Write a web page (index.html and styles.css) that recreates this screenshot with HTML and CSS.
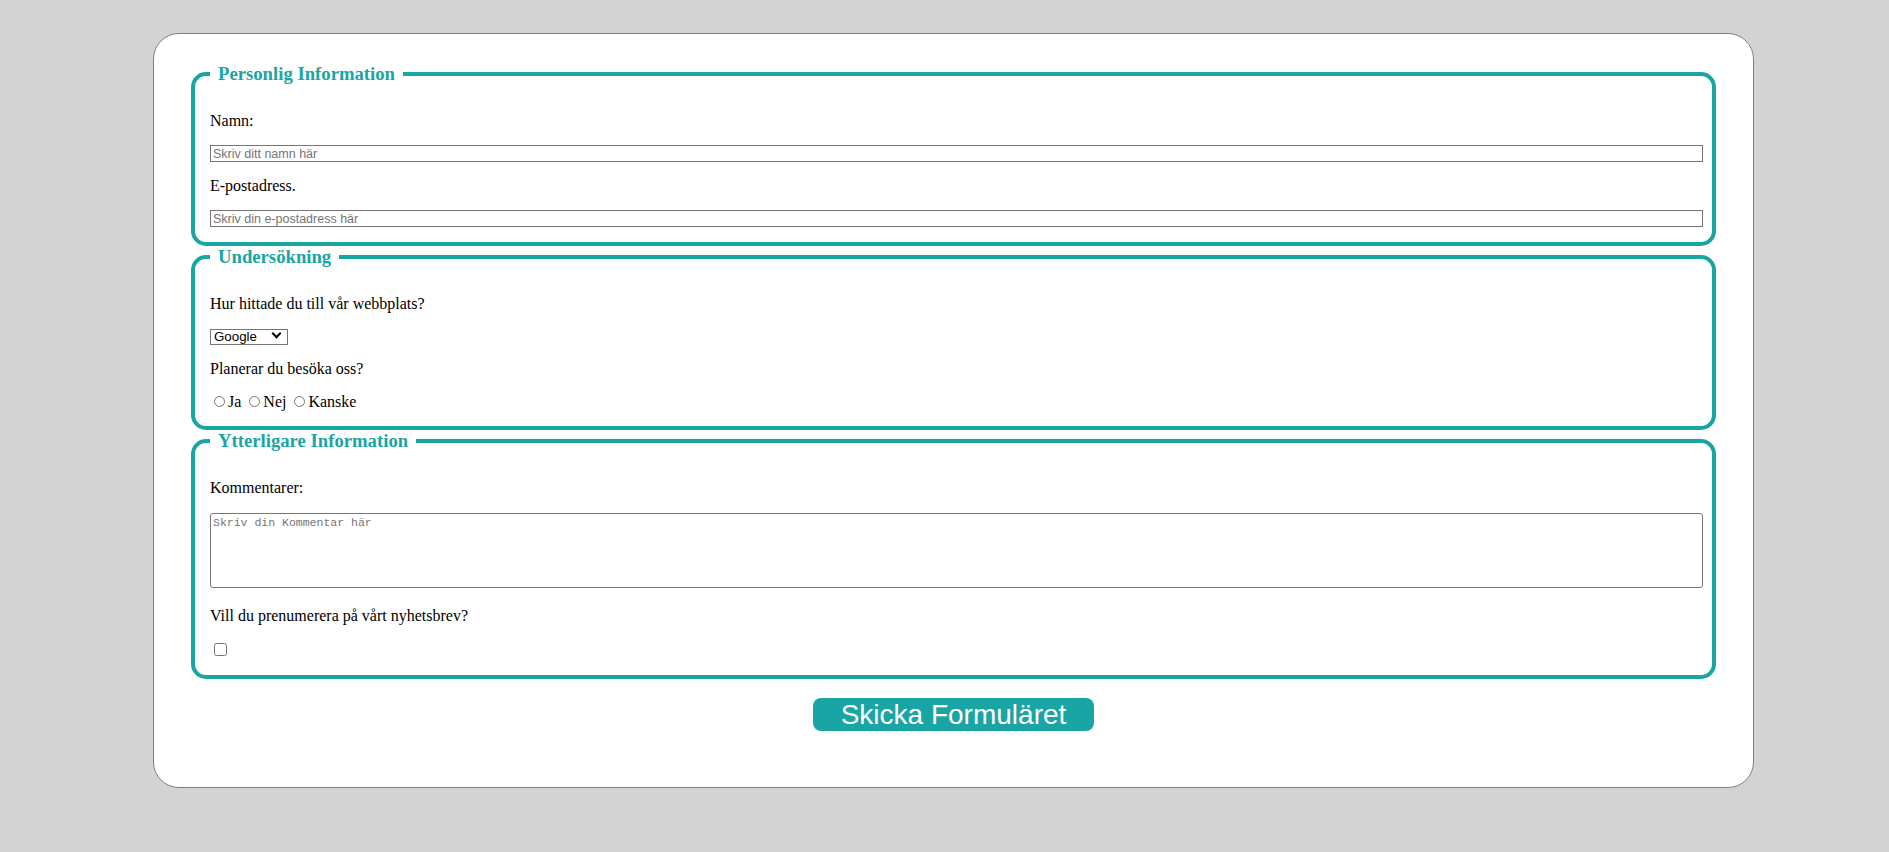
FILE: index.html
```html
<!DOCTYPE html>
<html lang="sv">
<head>
  <meta charset="UTF-8">
  <meta name="viewport" content="width=device-width, initial-scale=1.0">
  <title>Formulär</title>
  <link rel="stylesheet" href="styles.css">
</head>
<body>
  <div class="container">
    <form>
      <fieldset>
        <legend>Personlig Information</legend>
        <div class="fields">
          <label for="namn">Namn:</label>
          <input type="text" id="namn" name="namn" placeholder="Skriv ditt namn här">
          <label for="epost">E-postadress.</label>
          <input type="email" id="epost" name="epost" placeholder="Skriv din e-postadress här">
        </div>
      </fieldset>

      <fieldset>
        <legend>Undersökning</legend>
        <div class="fields">
          <label for="kalla">Hur hittade du till vår webbplats?</label>
          <span class="select-wrap">
            <select id="kalla" name="kalla">
              <option>Google</option>
              <option>Facebook</option>
              <option>Vän</option>
              <option>Annat</option>
            </select>
          </span>
          <span class="question">Planerar du besöka oss?</span>
          <div class="options">
            <input type="radio" id="ja" name="besok" value="ja"><label for="ja">Ja</label>
            <input type="radio" id="nej" name="besok" value="nej"><label for="nej">Nej</label>
            <input type="radio" id="kanske" name="besok" value="kanske"><label for="kanske">Kanske</label>
          </div>
        </div>
      </fieldset>

      <fieldset>
        <legend>Ytterligare Information</legend>
        <div class="fields">
          <label for="kommentar">Kommentarer:</label>
          <textarea id="kommentar" name="kommentar" placeholder="Skriv din Kommentar här"></textarea>
          <label for="nyhetsbrev">Vill du prenumerera på vårt nyhetsbrev?</label>
          <div class="options">
            <input type="checkbox" id="nyhetsbrev" name="nyhetsbrev">
          </div>
        </div>
      </fieldset>

      <div class="actions">
        <button type="submit">Skicka Formuläret</button>
      </div>
    </form>
  </div>
</body>
</html>
```

FILE: styles.css
```css
body {
  margin: 8px;
  background: #d3d3d3;
  font-family: "Liberation Serif", "Times New Roman", serif;
  font-size: 16px;
  color: #000;
}

.container {
  width: 1529px;
  margin: 25px 0 0 145px;
  padding: 29px 35px 56px;
  background: #fff;
  border: 1px solid #808080;
  border-radius: 26px;
}

fieldset {
  margin: 0 2px;
  padding: 27px 15px 15px;
  border: 4px solid #1aa5a5;
  border-radius: 15px;
}

legend {
  padding: 0 8px;
  color: #1aa5a5;
  font-weight: bold;
  font-size: 18.7px;
  line-height: 22px;
}

.fields {
  display: flex;
  flex-direction: column;
  align-items: flex-start;
  gap: 15px;
}

.fields label,
.question {
  display: block;
  line-height: 18px;
}

.options {
  line-height: 18px;
}

.options label {
  display: inline;
}

input[type="radio"] {
  width: 11px;
  height: 11px;
  margin: 3px 3px 0 4px;
}

input[type="text"],
input[type="email"] {
  box-sizing: content-box;
  width: 100%;
  height: 15px;
  padding: 0 2px;
  border: 1px solid #767676;
  font-family: "Liberation Sans", Arial, sans-serif;
  font-size: 12.5px;
}

/* select utan egen pil, chevron ritas av wrappern */
.select-wrap {
  position: relative;
  display: inline-block;
  margin-top: 1px;
}

.select-wrap::after {
  content: "";
  position: absolute;
  right: 8px;
  top: 1px;
  width: 5px;
  height: 5px;
  border-right: 2px solid #000;
  border-bottom: 2px solid #000;
  transform: rotate(45deg);
  pointer-events: none;
}

select {
  display: block;
  box-sizing: border-box;
  width: 78px;
  height: 16px;
  padding: 0 0 0 3px;
  border: 1px solid #767676;
  border-radius: 0;
  background: #fff;
  color: #000;
  font-family: "Liberation Sans", Arial, sans-serif;
  font-size: 13.33px;
  line-height: 14px;
  appearance: none;
  -webkit-appearance: none;
}

textarea {
  box-sizing: content-box;
  width: 100%;
  height: 69px;
  margin: 1px 0 4px;
  padding: 2px;
  border: 1px solid #767676;
  border-radius: 3px;
  font-family: "Liberation Mono", monospace;
  font-size: 11.5px;
  resize: none;
}

::placeholder {
  color: #757575;
}

.actions {
  margin-top: 19px;
  text-align: center;
}

button {
  height: 33px;
  padding: 0 28px;
  border: none;
  border-radius: 8px;
  background: #1aa5a5;
  color: #fff;
  font-family: "Liberation Sans", Arial, sans-serif;
  font-size: 28px;
  line-height: 33px;
  cursor: pointer;
}
```
